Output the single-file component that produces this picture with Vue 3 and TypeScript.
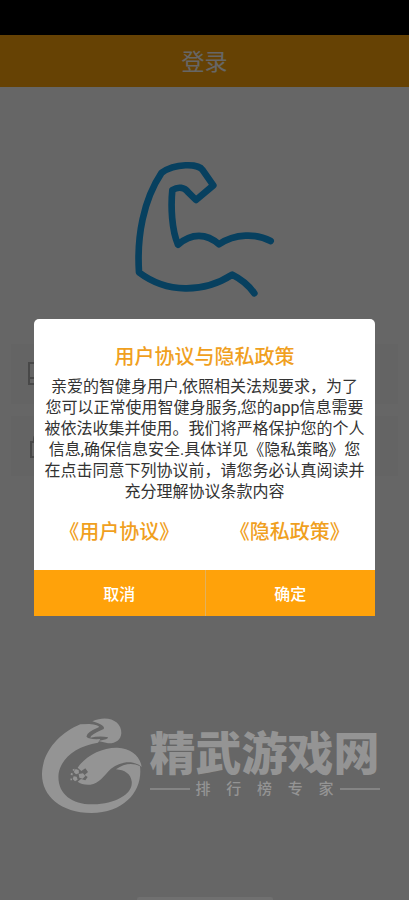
<script setup lang="ts">
import { ref } from 'vue'

const account = ref('')
const password = ref('')
const open = ref(true)

const agreement: string[] = [
  '亲爱的智健身用户,依照相关法规要求，为了',
  '您可以正常使用智健身服务,您的app信息需要',
  '被依法收集并使用。我们将严格保护您的个人',
  '信息,确保信息安全.具体详见《隐私策略》您',
  '在点击同意下列协议前，请您务必认真阅读并',
  '充分理解协议条款内容',
]
const tagline: string[] = [...'排行榜专家']
</script>

<template>
  <div class="page">
    <div class="status"></div>
    <header class="bar"><h1>登录</h1></header>
    <main class="login">
      <svg class="arm" viewBox="0 0 510 480" aria-hidden="true">
        <path d="M452 273C410 250 345 250 297 283C260 250 215 248 174 284C155 240 152 170 157 120C175 109 193 112 205 127L228 150L280 106L247 59C235 40 165 40 125 68C70 150 50 260 57 367C140 430 250 430 337 374C365 388 388 408 403 430" />
      </svg>
      <form class="fields" @submit.prevent>
        <label class="field">
          <svg viewBox="0 0 24 24" aria-hidden="true"><path d="M6 1h14v21H6zM6 16h14" /></svg>
          <input v-model="account" type="text" aria-label="账号" />
        </label>
        <label class="field">
          <svg viewBox="0 0 24 24" aria-hidden="true"><path d="M8 8h14v15H8zM11 8V5q0-4 4-4t4 4v3" /></svg>
          <input v-model="password" type="password" aria-label="密码" />
        </label>
      </form>
    </main>

    <div v-if="open" class="overlay">
      <section class="dialog" role="dialog" aria-modal="true" aria-labelledby="dialog-title">
        <div class="content">
          <h2 id="dialog-title">用户协议与隐私政策</h2>
          <p class="agreement">{{ agreement.join('\n') }}</p>
          <nav class="links">
            <a href="#terms">《用户协议》</a>
            <a href="#privacy">《隐私政策》</a>
          </nav>
        </div>
        <div class="actions">
          <button type="button" @click="open = false">取消</button>
          <button type="button" @click="open = false">确定</button>
        </div>
      </section>
    </div>

    <div class="watermark">
      <svg class="emblem" viewBox="0 0 390 360" aria-hidden="true">
        <path d="M187 49C235 28 275 50 274 84C273 105 256 116 234 115L205 108Q236 103 234 97Q210 92 181 98Q180 90 221 72Q228 62 187 49Z" />
        <path d="M151 58L178 57Q212 61 206 67Q166 84 170 96Q178 104 211 102L204 113C140 123 94 158 86 205C79 265 125 300 190 298C258 296 310 266 305 229C302 206 284 195 258 193C282 176 307 172 330 184C339 256 285 323 184 324C92 324 35 272 36 207C37 140 89 83 151 58Z" />
        <path d="M143 188C166 153 215 127 262 128C304 129 331 155 335 186C311 164 271 169 243 191C222 211 207 236 181 239C164 240 151 237 143 230L153 222L166 226L173 216L164 210L174 201L166 190L154 198Z" />
        <path d="M137 192l9 3 1 10-9 3-7-7zM146 207l13-2 7 8-8 8-10-3zM131 214l9 1 3 9-8 5-7-7zM123 204l5 1v6l-6-1zM122 220l4 1v5h-5zM128 193l5-2 1 5-5 2z" />
      </svg>
      <div class="brand">
        <strong>精武游戏网</strong>
        <div class="tagline">
          <i></i>
          <div class="words"><span v-for="word in tagline" :key="word">{{ word }}</span></div>
          <i></i>
        </div>
      </div>
    </div>
    <div class="home"></div>
  </div>
</template>

<style>
body {
  margin: 0;
}
</style>

<style scoped>
.page {
  position: relative;
  min-height: 100vh;
  background: #fff;
  font-family: Roboto, "Noto Sans CJK SC", sans-serif;
}
.status {
  height: 35px;
  background: #000;
}
.bar {
  display: flex;
  align-items: flex-end;
  justify-content: center;
  box-sizing: border-box;
  height: 52px;
  padding-bottom: 8px;
  background: #ffa50a;
}
h1 {
  margin: 0;
  color: #fff;
  font-size: 23px;
  font-weight: 400;
  line-height: 32px;
}
.login {
  display: flex;
  flex-direction: column;
  align-items: center;
  padding: 63px 11px 0;
}
.arm {
  width: 170px;
  height: 160px;
}
.arm path {
  fill: none;
  stroke: #12a0ee;
  stroke-width: 20;
  stroke-linecap: round;
  stroke-linejoin: round;
}
.fields {
  display: flex;
  flex-direction: column;
  gap: 12px;
  align-self: stretch;
  padding-top: 34px;
}
.field {
  display: flex;
  align-items: center;
  gap: 12px;
  height: 60px;
  padding: 0 12px;
  background: #f9f9f9;
}
.field svg {
  width: 24px;
  height: 24px;
  fill: none;
  stroke: #b4b4b4;
  stroke-width: 2;
}
.field input {
  flex: 1;
  min-width: 0;
  border: 0;
  outline: 0;
  background: transparent;
  font: inherit;
}
.overlay {
  position: absolute;
  inset: 0;
  display: flex;
  align-items: center;
  justify-content: center;
  padding-top: 35px;
  background: rgba(0, 0, 0, 0.6);
}
.dialog {
  width: 83.4%;
  overflow: hidden;
  border-radius: 5px 5px 0 0;
  background: #fff;
}
.content {
  padding: 24px 0 24px;
  text-align: center;
}
h2 {
  margin: 0;
  color: #f0a01e;
  font-size: 20px;
  font-weight: 500;
  line-height: 28px;
}
.agreement {
  margin: 5px 0 0;
  color: #333;
  font-size: 16px;
  line-height: 21px;
  white-space: pre-line;
}
.links {
  display: flex;
  justify-content: space-around;
  padding-top: 16px;
}
.links a {
  color: #f0a01e;
  font-size: 20px;
  font-weight: 500;
  line-height: 28px;
  text-decoration: none;
}
.actions {
  display: grid;
  grid-template-columns: 1fr 1fr;
}
.actions button {
  height: 46px;
  padding: 0;
  border: 0;
  background: #ffa20a;
  color: #fff;
  font: inherit;
  font-size: 16px;
  font-weight: 500;
}
.actions button + button {
  border-left: 1px solid #e2b15c;
}
.watermark {
  position: absolute;
  right: 0;
  bottom: 75px;
  left: 0;
  display: flex;
  justify-content: center;
  height: 120px;
  color: #949494;
  pointer-events: none;
}
.emblem {
  flex: none;
  width: 130px;
  height: 120px;
  margin-right: -10px;
  fill: currentColor;
}
.brand {
  display: flex;
  flex-direction: column;
  gap: 3px;
  padding-top: 26px;
}
.brand strong {
  font-size: 46px;
  font-weight: 900;
  line-height: 46px;
  white-space: nowrap;
}
.tagline {
  display: flex;
  align-items: center;
  gap: 6px;
  font-size: 15px;
  font-weight: 500;
  line-height: 18px;
}
.tagline i {
  width: 40px;
  height: 2px;
  background: #848484;
}
.words {
  display: flex;
  flex: 1;
  justify-content: space-between;
}
.home {
  position: absolute;
  bottom: 0;
  left: 50%;
  width: 136px;
  height: 3px;
  border-radius: 2px 2px 0 0;
  background: #707070;
  transform: translateX(-50%);
}
</style>
